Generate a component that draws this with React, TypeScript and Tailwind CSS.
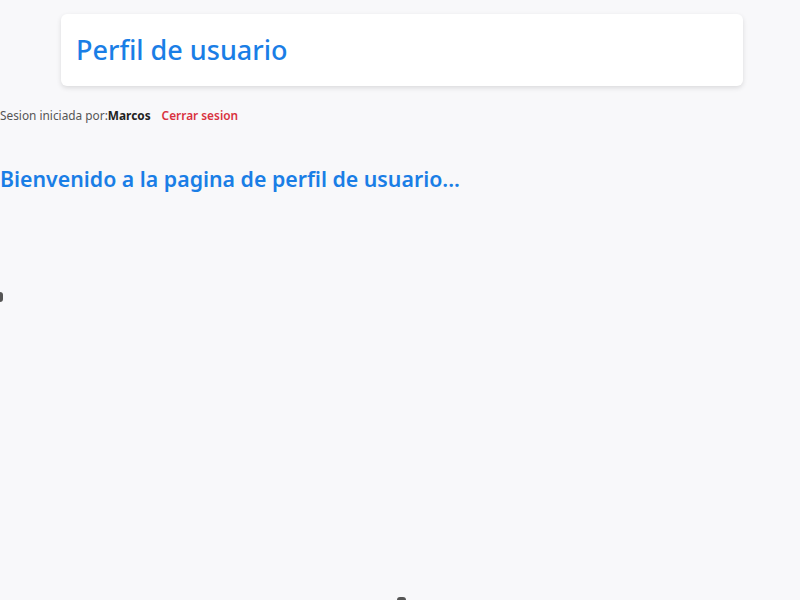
import React from 'react';

const App = () => {
  return (
    <div
      className="h-screen w-full overflow-hidden bg-[#f8f8fa] relative"
      style={{ fontFamily: '"Noto Sans", "Open Sans", sans-serif' }}
    >
      <div className="pt-[14px] px-[61px] pr-[57px]">
        <div className="bg-white rounded-md shadow-[0_2px_5px_rgba(0,0,0,0.12)] h-[72px] flex items-center px-[15px]">
          <h1 className="text-[27px] font-medium text-[#1a7ee6] leading-none -mt-[2px]">
            Perfil de usuario
          </h1>
        </div>
      </div>

      <div className="mt-[24px] flex items-center text-[11.85px] leading-none">
        <span className="text-[#555]">Sesion iniciada por:</span>
        <span className="font-bold text-[#222]">Marcos</span>
        <a href="#" className="ml-[11px] font-semibold text-[#d9323f]">
          Cerrar sesion
        </a>
      </div>

      <h2 className="mt-[46px] text-[21.3px] font-semibold text-[#1a7ee6] leading-none">
        Bienvenido a la pagina de perfil de usuario...
      </h2>

      <div className="mt-[103px] w-[3px] h-[10px] rounded-r-full bg-[#555]" />
      <div className="absolute bottom-0 left-[397px] w-[9px] h-[3px] rounded-t-sm bg-[#555]" />
    </div>
  );
};

export default App;
